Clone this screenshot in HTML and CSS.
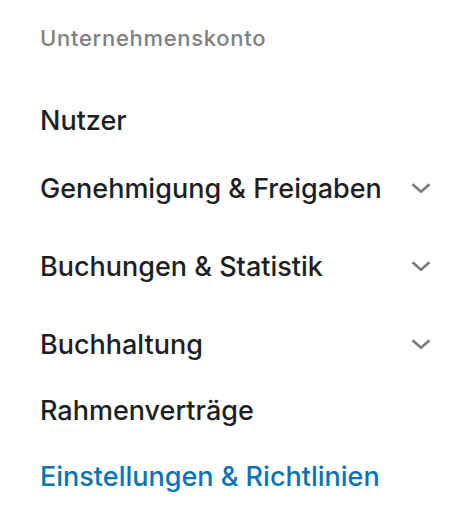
FILE: index.html
```html
<!DOCTYPE html>
<html lang="de">
<head>
<meta charset="utf-8">
<link rel="stylesheet" href="styles.css">
</head>
<body>
<nav class="menu">
  <div class="menu-title">Unternehmenskonto</div>
  <ul class="menu-list">
    <li class="menu-item">Nutzer</li>
    <li class="menu-item gap-s">Genehmigung &amp; Freigaben
      <svg class="chev" viewBox="0 0 20 10" width="20" height="10"><path d="M1.5 1.2 L10 8.7 L18.5 1.2" fill="none" stroke="currentColor" stroke-width="2.6"/></svg>
    </li>
    <li class="menu-item gap-l">Buchungen &amp; Statistik
      <svg class="chev" viewBox="0 0 20 10" width="20" height="10"><path d="M1.5 1.2 L10 8.7 L18.5 1.2" fill="none" stroke="currentColor" stroke-width="2.6"/></svg>
    </li>
    <li class="menu-item gap-l">Buchhaltung
      <svg class="chev" viewBox="0 0 20 10" width="20" height="10"><path d="M1.5 1.2 L10 8.7 L18.5 1.2" fill="none" stroke="currentColor" stroke-width="2.6"/></svg>
    </li>
    <li class="menu-item">Rahmenverträge</li>
    <li class="menu-item active">Einstellungen &amp; Richtlinien</li>
  </ul>
</nav>
</body>
</html>
```
FILE: styles.css
```css
html, body {
  margin: 0;
  padding: 0;
  background: #ffffff;
}
.menu {
  width: 462px;
  padding: 24px 31px 0 40px;
  box-sizing: border-box;
  font-family: Inter, "Liberation Sans", sans-serif;
}
.menu-title {
  font-size: 22px;
  font-weight: 500;
  letter-spacing: 0.7px;
  color: #808080;
  line-height: 28px;
  height: 63px;
}
.menu-list {
  list-style: none;
  margin: 0;
  padding: 0;
}
.menu-item {
  display: flex;
  align-items: center;
  justify-content: space-between;
  height: 66px;
  font-size: 27px;
  font-weight: 500;
  color: #1d1f22;
}
.menu-item.gap-s {
  margin-top: 2px;
}
.menu-item.gap-l {
  margin-top: 12px;
}
.menu-item.active {
  color: #0a73b5;
}
.chev {
  color: #7b7b7b;
  flex: none;
}
```
